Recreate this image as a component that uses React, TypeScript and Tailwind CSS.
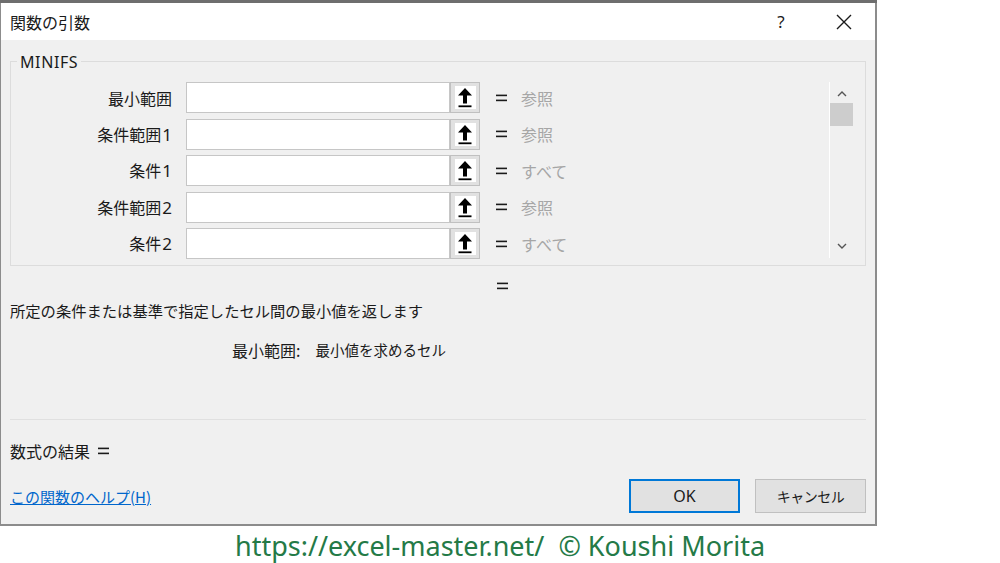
import React from "react";

const jp = { fontFamily: '"Noto Sans CJK JP", "Noto Sans", sans-serif' };
const latin = { fontFamily: '"Noto Sans", "Noto Sans CJK JP", sans-serif' };

function RefButton() {
  return (
    <div className="w-[30px] h-[31px] bg-[#e1e1e1] border border-[#c0c0c0] flex items-center justify-center">
      <div className="w-[21px] h-[23px] bg-white flex items-center justify-center">
        <svg width="16" height="21" viewBox="0 0 16 21">
          <path d="M8 1 L15 8.5 L10 8.5 L10 16.5 L6 16.5 L6 8.5 L1 8.5 Z" fill="#000" />
          <rect x="1.5" y="18.4" width="13" height="1.8" fill="#000" />
        </svg>
      </div>
    </div>
  );
}

function Eq() {
  return (
    <svg width="11" height="8" viewBox="0 0 11 8">
      <rect x="0" y="0.6" width="11" height="1.6" fill="#1a1a1a" />
      <rect x="0" y="5.6" width="11" height="1.6" fill="#1a1a1a" />
    </svg>
  );
}

function Label({ text }: { text: string }) {
  const m = text.match(/^(.*?)(\d?)$/);
  const kanji = m ? m[1] : text;
  const digit = m ? m[2] : "";
  return (
    <div className="w-[161px] text-right text-[16px] text-[#1a1a1a] leading-none">
      {kanji}
      {digit && (
        <span className="text-[17px] ml-[1px]" style={latin}>
          {digit}
        </span>
      )}
    </div>
  );
}

function ArgRow({ label, result }: { label: string; result: string }) {
  return (
    <div className="flex items-center h-[31px]">
      <Label text={label} />
      <div className="ml-[14px] w-[264px] h-[31px] bg-white border border-[#c6c6c6]" />
      <RefButton />
      <div className="ml-[16px] w-[11px] flex items-center">
        <Eq />
      </div>
      <div className="ml-[14px] text-[16px] text-[#a6a6a6] leading-none">{result}</div>
    </div>
  );
}

export default function App() {
  return (
    <div className="w-[1000px] h-[563px] bg-white relative overflow-hidden" style={jp}>
      <div className="h-[3px] w-[877px] bg-[#6e6e6e]" />
      <div className="w-[877px] h-[523px] border-l border-r-2 border-b-2 border-[#8c8c8c] flex flex-col">
        {/* title bar */}
        <div className="h-[37px] bg-white flex items-center pl-[9px] shrink-0">
          <div className="text-[16px] text-[#1a1a1a]">関数の引数</div>
          <div className="ml-auto flex items-center">
            <div className="w-[20px] text-center text-[17px] text-[#1a1a1a]" style={latin}>?</div>
            <div className="ml-[44px] mr-[22px]">
              <svg width="18" height="18" viewBox="0 0 18 18">
                <path d="M2 2 L16 16 M16 2 L2 16" stroke="#1a1a1a" strokeWidth="1.4" />
              </svg>
            </div>
          </div>
        </div>
        {/* body */}
        <div className="flex-1 bg-[#f0f0f0] flex flex-col pl-[9px] pr-[9px]">
          <div className="relative mt-[21px] w-[856px] h-[205px] border border-[#dcdcdc] flex">
            <div
              className="absolute left-[6px] top-[-11px] bg-[#f0f0f0] px-[3px] text-[16px] tracking-[0.6px] text-[#1a1a1a] leading-[22px]"
              style={latin}
            >
              MINIFS
            </div>
            <div className="flex flex-col gap-[5.5px] pt-[20px]">
              <ArgRow label="最小範囲" result="参照" />
              <ArgRow label="条件範囲1" result="参照" />
              <ArgRow label="条件1" result="すべて" />
              <ArgRow label="条件範囲2" result="参照" />
              <ArgRow label="条件2" result="すべて" />
            </div>
            <div className="ml-auto mr-[12px] mt-[20px] w-[24px] h-[176px] border-l border-white flex flex-col items-center">
              <svg className="mt-[9px]" width="10" height="6" viewBox="0 0 10 6">
                <path d="M1 5 L5 1 L9 5" stroke="#555" strokeWidth="1.4" fill="none" />
              </svg>
              <div className="mt-[6px] w-[23px] h-[23px] bg-[#cdcdcd]" />
              <svg className="mt-auto mb-[9px]" width="10" height="6" viewBox="0 0 10 6">
                <path d="M1 1 L5 5 L9 1" stroke="#555" strokeWidth="1.4" fill="none" />
              </svg>
            </div>
          </div>
          <div className="mt-[10px] h-[20px] flex items-center">
            <div className="ml-[487px] flex items-center">
              <Eq />
            </div>
          </div>
          <div className="mt-[5px] h-[20px] flex items-center text-[15.3px] text-[#1a1a1a] leading-none">
            所定の条件または基準で指定したセル間の最小値を返します
          </div>
          <div className="mt-[19px] h-[20px] flex items-center text-[#1a1a1a] leading-none pl-[222px]">
            <span className="text-[16px]">最小範囲:</span>
            <span className="ml-[15px] text-[14.5px]">最小値を求めるセル</span>
          </div>
          <div className="mt-[59px] w-[856px] h-px bg-[#e0e0e0]" />
          <div className="mt-[21px] h-[20px] flex items-center text-[16px] text-[#1a1a1a] leading-none">
            <span>数式の結果</span>
            <span className="ml-[8px] flex items-center">
              <Eq />
            </span>
          </div>
          <div className="mt-[18px] h-[34px] flex items-center">
            <a className="text-[15px] text-[#0066cc] underline leading-none">この関数のヘルプ(H)</a>
            <div className="ml-auto flex gap-[15px]">
              <div
                className="w-[111px] h-[34px] bg-[#e1e1e1] border-2 border-[#0078d7] flex items-center justify-center text-[16px] text-[#1a1a1a]"
                style={latin}
              >
                OK
              </div>
              <div className="w-[111px] h-[34px] bg-[#e1e1e1] border border-[#c0c0c0] flex items-center justify-center text-[14px] tracking-[-0.5px] text-[#1a1a1a]">
                キャンセル
              </div>
            </div>
          </div>
        </div>
      </div>
      <div className="h-[37px] flex items-center justify-center pt-[2px]">
        <div className="text-[27px] text-[#247a47] leading-none whitespace-pre" style={latin}>
          {"https://excel-master.net/  © Koushi Morita"}
        </div>
      </div>
    </div>
  );
}
